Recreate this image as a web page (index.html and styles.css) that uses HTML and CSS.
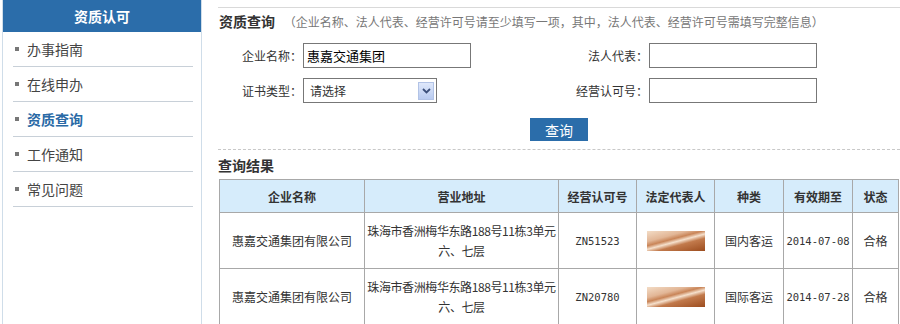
FILE: index.html
```html
<!DOCTYPE html>
<html lang="zh-CN">
<head>
    <meta charset="UTF-8">
    <title>资质查询</title>
    <link rel="stylesheet" href="styles.css">
</head>
<body>
    <div class="page">
        <div class="sidebar">
            <div class="side-title">资质认可</div>
            <ul class="side-menu">
                <li><a href="#">办事指南</a></li>
                <li><a href="#">在线申办</a></li>
                <li class="active"><a href="#">资质查询</a></li>
                <li><a href="#">工作通知</a></li>
                <li><a href="#">常见问题</a></li>
            </ul>
        </div>

        <div class="main">
            <div class="title-row">
                <span class="title">资质查询</span>
                <span class="hint">（企业名称、法人代表、经营许可号请至少填写一项，其中，法人代表、经营许可号需填写完整信息）</span>
            </div>

            <form class="search-form" onsubmit="return false;">
                <label>企业名称：</label>
                <div><input type="text" value="惠嘉交通集团"></div>
                <label>法人代表：</label>
                <div><input type="text"></div>

                <label>证书类型：</label>
                <div>
                    <div class="select">
                        <span>请选择</span>
                        <span class="select-arrow">
                            <svg width="9" height="6" viewBox="0 0 9 6"><path d="M1 1 L4.5 4.5 L8 1" fill="none" stroke="#3b4f7a" stroke-width="1.8"/></svg>
                        </span>
                    </div>
                </div>
                <label>经营认可号：</label>
                <div><input type="text"></div>
            </form>

            <div class="btn-row">
                <button type="button">查询</button>
            </div>

            <div class="result-title">查询结果</div>

            <table class="result">
                <tr>
                    <th class="c1">企业名称</th>
                    <th class="c2">营业地址</th>
                    <th class="c3">经营认可号</th>
                    <th class="c4">法定代表人</th>
                    <th class="c5">种类</th>
                    <th class="c6">有效期至</th>
                    <th class="c7">状态</th>
                </tr>
                <tr>
                    <td>惠嘉交通集团有限公司</td>
                    <td class="addr">珠海市香洲梅华东路188号11栋3单元<br>六、七层</td>
                    <td class="code">ZN51523</td>
                    <td><span class="sign"></span></td>
                    <td>国内客运</td>
                    <td class="code">2014-07-08</td>
                    <td>合格</td>
                </tr>
                <tr>
                    <td>惠嘉交通集团有限公司</td>
                    <td class="addr">珠海市香洲梅华东路188号11栋3单元<br>六、七层</td>
                    <td class="code">ZN20780</td>
                    <td><span class="sign"></span></td>
                    <td>国际客运</td>
                    <td class="code">2014-07-28</td>
                    <td>合格</td>
                </tr>
            </table>
        </div>
    </div>
</body>
</html>
```

FILE: styles.css
```css
body {
    margin: 0;
    background: #fff;
    font-family: "Noto Sans CJK SC", "Liberation Sans", sans-serif;
    font-size: 12px;
    color: #333;
}
.page {
    display: flex;
    align-items: flex-start;
    height: 324px;
    overflow: hidden;
}
.sidebar {
    flex-shrink: 0;
    width: 198px;
    height: 330px;
    margin-left: 2px;
    border-left: 1px solid #cfdde9;
    border-right: 1px solid #cfdde9;
}
.side-title {
    height: 32px;
    line-height: 32px;
    background: #2b6daa;
    color: #fff;
    text-align: center;
    font-size: 14px;
    font-weight: bold;
}
.side-menu {
    list-style: none;
    margin: 0;
    padding: 0 8px 0 10px;
}
.side-menu li {
    height: 34px;
    line-height: 34px;
    border-bottom: 1px solid #c8d0d8;
    padding-left: 14px;
    position: relative;
}
.side-menu li::before {
    content: "";
    position: absolute;
    left: 2px;
    top: 15px;
    width: 4px;
    height: 4px;
    background: #777;
}
.side-menu a {
    color: #444;
    text-decoration: none;
    font-size: 14px;
}
.side-menu li.active a {
    color: #2a6aa6;
    font-weight: bold;
}
.main {
    flex: 1;
    min-width: 0;
    margin-left: 16px;
    margin-top: 7px;
    border-top: 1px solid #d9d9d9;
}
.title-row {
    height: 26px;
    line-height: 26px;
    padding-left: 1px;
    white-space: nowrap;
}
.title {
    font-size: 14px;
    font-weight: bold;
    color: #333;
    margin-right: 6px;
}
.hint {
    color: #777;
    font-size: 12px;
}
.search-form {
    display: grid;
    grid-template-columns: 84px 262px 84px 170px;
    grid-auto-rows: 25px;
    row-gap: 10px;
    margin-top: 9px;
    align-items: center;
}
.search-form label {
    text-align: right;
    color: #333;
}
.search-form input {
    box-sizing: border-box;
    width: 168px;
    height: 25px;
    margin-left: 1px;
    border: 1px solid #777;
    padding: 0 3px;
    font-family: inherit;
    font-size: 13px;
    color: #000;
    outline: none;
}
.select {
    box-sizing: border-box;
    width: 134px;
    height: 25px;
    margin-left: 1px;
    border: 1px solid #777;
    display: flex;
    align-items: center;
    justify-content: space-between;
    padding: 0 2px 0 6px;
    color: #333;
}
.select-arrow {
    width: 16px;
    height: 18px;
    background: linear-gradient(180deg, #dfe8fb, #b9cbf0);
    border: 1px solid #b2c3e6;
    display: flex;
    align-items: center;
    justify-content: center;
    box-sizing: border-box;
}
.btn-row {
    text-align: center;
    margin-top: 15px;
}
.btn-row button {
    width: 58px;
    height: 23px;
    border: none;
    background: #2b6daa;
    color: #fff;
    font-family: inherit;
    font-size: 14px;
    padding: 0;
    cursor: pointer;
}
.result-title {
    border-top: 1px dashed #c8c8c8;
    margin-top: 8px;
    height: 29px;
    line-height: 30px;
    font-size: 14px;
    font-weight: bold;
    color: #333;
}
.result {
    border-collapse: collapse;
    width: 679px;
    margin-left: 1px;
    table-layout: fixed;
}
.result th, .result td {
    border: 1px solid #a8a8a8;
    text-align: center;
    padding: 0;
}
.result th {
    height: 32px;
    background: #d6ecfb;
    font-weight: bold;
    color: #333;
}
.result td {
    height: 55px;
    color: #333;
    line-height: 20px;
}
.result td.addr {
    white-space: nowrap;
    letter-spacing: -0.4px;
}
.result td.code {
    font-family: "DejaVu Sans Mono", "Liberation Mono", monospace;
    font-size: 10.5px;
}
.c1 { width: 144px; }
.c2 { width: 193px; }
.c3 { width: 77px; }
.c4 { width: 77px; }
.c5 { width: 68px; }
.c6 { width: 68px; }
.c7 { width: 45px; }
.sign {
    display: inline-block;
    width: 58px;
    height: 20px;
    vertical-align: middle;
    background: linear-gradient(165deg, #f3dcc6 0%, #e2b696 30%, #c98558 42%, #f5e0cc 52%, #c27a4c 64%, #9c4c1e 100%);
}
```
